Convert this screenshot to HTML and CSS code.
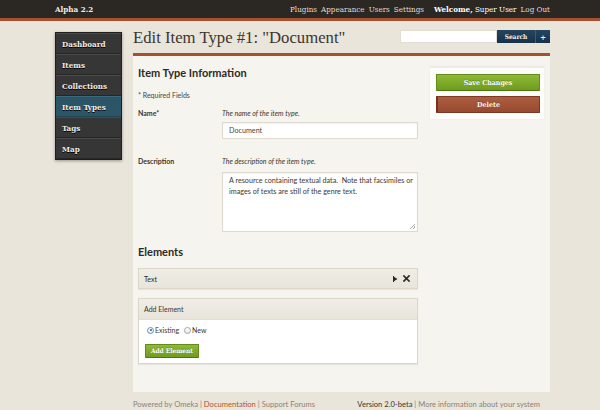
FILE: index.html
```html
<!DOCTYPE html>
<html lang="en">
<head>
<meta charset="utf-8">
<title>Edit Item Type</title>
<link rel="stylesheet" href="styles.css">
</head>
<body>
<header class="topbar">
  <div class="topbar-inner">
    <a class="site-title" href="#">Alpha 2.2</a>
    <nav class="topnav">
      <a href="#">Plugins</a>
      <a href="#">Appearance</a>
      <a href="#">Users</a>
      <a href="#">Settings</a>
      <span class="welcome"><b>Welcome,</b> <a href="#">Super User</a></span>
      <a href="#">Log Out</a>
    </nav>
  </div>
</header>

<div class="wrap">
  <aside class="sidebar">
    <ul>
      <li><a href="#">Dashboard</a></li>
      <li><a href="#">Items</a></li>
      <li><a href="#">Collections</a></li>
      <li class="active"><a href="#">Item Types</a></li>
      <li><a href="#">Tags</a></li>
      <li><a href="#">Map</a></li>
    </ul>
  </aside>

  <main class="content">
    <div class="titlebar">
      <h1>Edit Item Type #1: "Document"</h1>
      <form class="search">
        <input type="text" class="search-input">
        <button type="button" class="search-btn">Search</button>
        <button type="button" class="search-adv">+</button>
      </form>
    </div>

    <div class="panel">
      <section class="main-col">
        <h2 class="section-title">Item Type Information</h2>
        <p class="required">* Required Fields</p>

        <div class="field">
          <label class="field-label">Name*</label>
          <div class="field-inputs">
            <p class="explanation">The name of the item type.</p>
            <div class="textbox">Document</div>
          </div>
        </div>

        <div class="field field-desc">
          <label class="field-label">Description</label>
          <div class="field-inputs">
            <p class="explanation">The description of the item type.</p>
            <div class="textarea">A resource containing textual data.&nbsp; Note that facsimiles or images of texts are still of the genre text.<span class="grip"></span></div>
          </div>
        </div>

        <h2 class="section-title elements-title">Elements</h2>

        <div class="element-row">
          <span>Text</span>
          <span class="row-icons">
            <svg width="5" height="6" viewBox="0 0 5 6"><path d="M0.5 0.5 L4.5 3 L0.5 5.5 Z" fill="#2a2622"/><rect x="0" y="0" width="1" height="6" fill="#2a2622"/></svg>
            <svg width="7" height="7" viewBox="0 0 7 7"><path d="M1 1 L6 6 M6 1 L1 6" stroke="#2a2622" stroke-width="1.7" stroke-linecap="square"/></svg>
          </span>
        </div>

        <div class="add-box">
          <div class="add-head">Add Element</div>
          <div class="add-body">
            <div class="radios">
              <span class="radio checked"></span><span class="radio-label">Existing</span>
              <span class="radio"></span><span class="radio-label">New</span>
            </div>
            <button type="button" class="btn-green small">Add Element</button>
          </div>
        </div>
      </section>

      <aside class="save-col">
        <div class="save-box">
          <button type="button" class="btn-green">Save Changes</button>
          <button type="button" class="btn-red">Delete</button>
        </div>
      </aside>
    </div>

    <footer class="footer">
      <p>Powered by Omeka | <a class="doc" href="#">Documentation</a> | Support Forums</p>
      <p><span class="version">Version 2.0-beta</span> | More information about your system</p>
    </footer>
  </main>
</div>
</body>
</html>
```

FILE: styles.css
```css
* { box-sizing: border-box; }

body {
  margin: 0;
  background: #e9e5da;
  font-family: "Lato", "Liberation Sans", sans-serif;
  color: #3a3530;
}

a { text-decoration: none; color: inherit; }
p { margin: 0; }

/* top bar */
.topbar {
  height: 21px;
  background: #2b2723;
  border-bottom: 3px solid #a3502e;
}
.topbar-inner {
  margin-left: 55px;
  width: 495px;
  height: 18px;
  display: flex;
  align-items: center;
  justify-content: space-between;
  font-family: "DejaVu Serif Condensed", "Liberation Serif", serif;
  font-size: 8px;
}
.site-title {
  color: #f1ede6;
  font-weight: bold;
}
.topnav {
  display: flex;
  gap: 4px;
  align-items: center;
  color: #e2ddd4;
}
.topnav .welcome {
  margin-left: 6px;
  color: #fff;
}
.topnav .welcome b { color: #fff; }

/* layout */
.wrap {
  margin-left: 55px;
  width: 495px;
  display: flex;
  gap: 11px;
  align-items: flex-start;
}

/* sidebar */
.sidebar {
  width: 67px;
  margin-top: 11px;
  background: #363636;
  border: 1px solid #1f1f1f;
  box-shadow: 0 1px 3px rgba(0,0,0,0.35);
}
.sidebar ul { list-style: none; margin: 0; padding: 0; }
.sidebar li {
  height: 21px;
  display: flex;
  align-items: center;
  padding-left: 6px;
  border-top: 1px solid #4a4a4a;
  border-bottom: 1px solid #262626;
}
.sidebar li a {
  color: #f2eee6;
  font-family: "DejaVu Serif Condensed", "Liberation Serif", serif;
  font-weight: bold;
  font-size: 8px;
  text-shadow: 0 1px 0 #000;
}
.sidebar li.active {
  background: #2c5567;
  border-top-color: #3b6a7e;
  border-bottom-color: #1f4252;
}

/* content */
.content { width: 417px; }

.titlebar {
  height: 35px;
  display: flex;
  justify-content: space-between;
  align-items: flex-start;
  border-bottom: 3px solid #a3502e;
}
.titlebar h1 {
  margin: 7px 0 0 0;
  font-family: "Liberation Serif", serif;
  font-weight: normal;
  font-size: 16.7px;
  line-height: 20px;
  color: #3b3631;
}
.search {
  display: flex;
  margin-top: 9px;
  height: 13px;
}
.search-input {
  width: 97px;
  height: 13px;
  border: 1px solid #e2ded4;
  background: #fff;
  padding: 0;
  margin: 0;
}
.search-btn, .search-adv {
  height: 13px;
  border: none;
  margin: 0;
  padding: 0;
  background: linear-gradient(#244560, #173248);
  color: #f4f4f4;
  font-family: "DejaVu Serif Condensed", "Liberation Serif", serif;
  font-weight: bold;
  font-size: 6.5px;
}
.search-btn { width: 38px; }
.search-adv { width: 15px; border-left: 1px solid #3d5c75; font-size: 8px; }

/* panel */
.panel {
  height: 336px;
  background: #f5f4ef;
  padding: 10px 6px 0 5px;
  display: flex;
  gap: 12px;
  align-items: flex-start;
}
.main-col { width: 280px; }

.section-title {
  margin: 0;
  font-size: 11px;
  line-height: 14px;
  font-weight: bold;
  color: #2e2a26;
}
.required {
  margin-top: 10px;
  font-size: 7px;
  line-height: 10px;
  color: #4a453f;
}
.field {
  display: flex;
  margin-top: 8px;
}
.field-desc { margin-top: 17px; }
.field-label {
  width: 84px;
  font-size: 7px;
  line-height: 10px;
  font-weight: bold;
  color: #3a3530;
}
.field-inputs { width: 196px; }
.explanation {
  font-size: 7px;
  line-height: 10px;
  font-style: italic;
  color: #3a3530;
}
.textbox {
  margin-top: 4px;
  height: 17px;
  background: #fff;
  border: 1px solid #dedad0;
  box-shadow: inset 0 1px 2px rgba(0,0,0,0.06);
  font-size: 7.2px;
  line-height: 15px;
  padding-left: 6px;
  color: #4a453f;
}
.textarea {
  position: relative;
  margin-top: 6px;
  height: 60px;
  background: #fff;
  border: 1px solid #dedad0;
  box-shadow: inset 0 1px 2px rgba(0,0,0,0.06);
  font-size: 7.2px;
  line-height: 10.5px;
  padding: 3px 2px 0 6px;
  color: #3e3934;
}
.grip {
  position: absolute;
  right: 2px;
  bottom: 2px;
  width: 5px;
  height: 5px;
  background: linear-gradient(135deg, transparent 45%, #aaa 45%, #aaa 55%, transparent 55%, transparent 70%, #aaa 70%, #aaa 80%, transparent 80%);
}

.elements-title { margin-top: 13px; }

.element-row {
  margin-top: 9px;
  height: 21px;
  background: linear-gradient(#f0ede5, #e9e5db);
  border: 1px solid #dcd6c9;
  box-shadow: 0 1px 1px rgba(0,0,0,0.06);
  display: flex;
  align-items: center;
  justify-content: space-between;
  padding: 0 7px 0 5px;
  font-size: 7px;
  color: #2e2a26;
}
.row-icons { display: flex; gap: 5px; align-items: center; }
.row-icons svg { display: block; }

.add-box {
  margin-top: 9px;
  border: 1px solid #dcd6c9;
  box-shadow: 0 1px 1px rgba(0,0,0,0.06);
}
.add-head {
  height: 21px;
  background: linear-gradient(#f0ede5, #e9e5db);
  border-bottom: 1px solid #e3ded2;
  padding-left: 5px;
  font-size: 7px;
  line-height: 20px;
  color: #3a3530;
}
.add-body {
  background: #fff;
  padding: 5px 6px 5px 6px;
}
.radios {
  display: flex;
  align-items: center;
  height: 10px;
  font-size: 7px;
  color: #3a3530;
}
.radio {
  width: 7px;
  height: 7px;
  border-radius: 50%;
  border: 1px solid #a5a5a5;
  background: linear-gradient(#fff, #e8e8e8);
  margin: 0 1px 0 2px;
  position: relative;
}
.radio.checked { border-color: #5d8fc4; }
.radio.checked::after {
  content: "";
  position: absolute;
  left: 1.5px; top: 1.5px;
  width: 2px; height: 2px;
  border-radius: 50%;
  background: #2f5f98;
}
.radio-label { margin-right: 3px; }

.btn-green, .btn-red {
  display: block;
  width: 104px;
  height: 17px;
  margin: 0;
  padding: 0;
  font-family: "DejaVu Serif Condensed", "Liberation Serif", serif;
  font-weight: bold;
  font-size: 7px;
  color: #fbfbf6;
  text-shadow: 0 -1px 0 rgba(0,0,0,0.25);
  border-radius: 1px;
}
.btn-green {
  background: linear-gradient(#8fba34, #6f9b1f);
  border: 1px solid #628c17;
  border-bottom-color: #4f7510;
}
.btn-red {
  margin-top: 5px;
  background: linear-gradient(#ad5e41, #974a30);
  border: 1px solid #7d3a22;
  border-left: 2px solid #7a2f18;
}
.btn-green.small {
  margin-top: 9px;
  width: 54px;
  height: 14px;
  font-size: 6.5px;
}

.save-col { width: 114px; margin-top: 0; }
.save-box {
  background: #fdfdfb;
  border-top: 2px solid #ecebe4;
  padding: 6px 4px 6px 6px;
  box-shadow: 0 0 1px rgba(0,0,0,0.08);
}

/* footer */
.footer {
  display: flex;
  justify-content: space-between;
  padding: 7px 10px 0 0;
  font-size: 7.6px;
  line-height: 11px;
  color: #8c8277;
}
.footer .doc { color: #b4532f; }
.footer .version { color: #3a3530; }
```
